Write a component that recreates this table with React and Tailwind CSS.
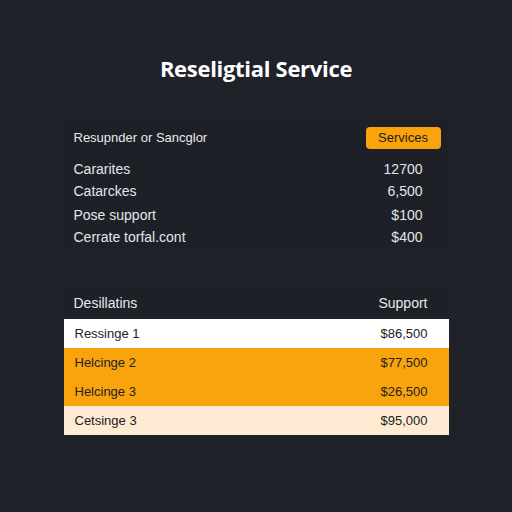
import React from "react";

const topRows = [
  { label: "Cararites", value: "12700" },
  { label: "Catarckes", value: "6,500" },
  { label: "Pose support", value: "$100" },
  { label: "Cerrate torfal.cont", value: "$400" },
];

const tableRows = [
  { label: "Ressinge 1", value: "$86,500", bg: "bg-white" },
  { label: "Helcinge 2", value: "$77,500", bg: "bg-[#f9a30d]" },
  { label: "Helcinge 3", value: "$26,500", bg: "bg-[#f9a30d]" },
  { label: "Cetsinge 3", value: "$95,000", bg: "bg-[#fdebd3]" },
];

const App = () => {
  return (
    <div className="w-[512px] h-[512px] bg-[#1f2229] flex flex-col items-center font-['Liberation_Sans',sans-serif]">
      <h1 className="mt-[54px] text-[22px] leading-[28px] font-bold text-white font-['Open_Sans',sans-serif] tracking-[-0.3px]">
        Reseligtial Service
      </h1>

      {/* Summary panel */}
      <div className="mt-[38px] w-[385px] h-[130px] bg-[#1d2027] pl-[10px] pr-[8px] pt-[7px]">
        <div className="flex items-center justify-between h-[22px]">
          <span className="text-[13px] text-[#e8e9eb]">Resupnder or Sancglor</span>
          <span className="w-[75px] h-[22px] rounded-[4px] bg-[#f9a30d] text-[#1f1a12] text-[13px] flex items-center justify-center">
            Services
          </span>
        </div>
        <div className="mt-[9px] pr-[18px] text-[14px] text-[#e4e5e8]">
          {topRows.map((row, i) => (
            <div
              key={row.label}
              className={`flex justify-between items-center h-[22px] ${i === 2 ? "mt-[2px]" : ""}`}
            >
              <span>{row.label}</span>
              <span>{row.value}</span>
            </div>
          ))}
        </div>
      </div>

      {/* Table panel */}
      <div className="mt-[38px] w-[385px] bg-[#1d2027]">
        <div className="flex items-center justify-between h-[31px] pl-[10px] pr-[21px] text-[14px] text-[#e8e9eb]">
          <span>Desillatins</span>
          <span>Support</span>
        </div>
        {tableRows.map((row) => (
          <div
            key={row.label}
            className={`${row.bg} flex items-center justify-between h-[29px] pl-[11px] pr-[21px] text-[13px] text-[#222222]`}
          >
            <span>{row.label}</span>
            <span>{row.value}</span>
          </div>
        ))}
      </div>
    </div>
  );
};

export default App;
